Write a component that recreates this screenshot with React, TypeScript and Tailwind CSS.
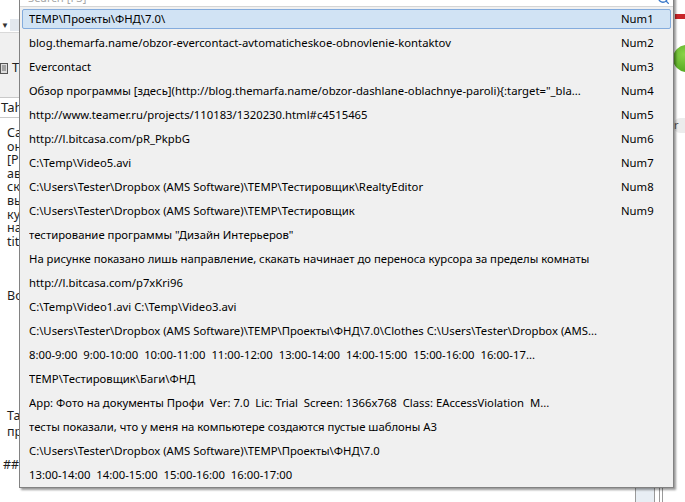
import { Search } from 'lucide-react';

interface ClipItem {
  text: string;
  hotkey?: string;
}

const items: ClipItem[] = [
  { text: 'ТЕМР\\Проекты\\ФНД\\7.0\\', hotkey: 'Num1' },
  { text: 'blog.themarfa.name/obzor-evercontact-avtomaticheskoe-obnovlenie-kontaktov', hotkey: 'Num2' },
  { text: 'Evercontact', hotkey: 'Num3' },
  {
    text: 'Обзор программы [здесь](http://blog.themarfa.name/obzor-dashlane-oblachnye-paroli){:target="_bla...',
    hotkey: 'Num4',
  },
  { text: 'http://www.teamer.ru/projects/110183/1320230.html#c4515465', hotkey: 'Num5' },
  { text: 'http://l.bitcasa.com/pR_PkpbG', hotkey: 'Num6' },
  { text: 'C:\\Temp\\Video5.avi', hotkey: 'Num7' },
  { text: 'C:\\Users\\Tester\\Dropbox (AMS Software)\\TEMP\\Тестировщик\\RealtyEditor', hotkey: 'Num8' },
  { text: 'C:\\Users\\Tester\\Dropbox (AMS Software)\\TEMP\\Тестировщик', hotkey: 'Num9' },
  { text: 'тестирование программы "Дизайн Интерьеров"' },
  { text: 'На рисунке показано лишь направление, скакать начинает до переноса курсора за пределы комнаты' },
  { text: 'http://l.bitcasa.com/p7xKri96' },
  { text: 'C:\\Temp\\Video1.avi C:\\Temp\\Video3.avi' },
  {
    text: 'C:\\Users\\Tester\\Dropbox (AMS Software)\\TEMP\\Проекты\\ФНД\\7.0\\Clothes C:\\Users\\Tester\\Dropbox (AMS...',
  },
  {
    text: '8:00-9:00  9:00-10:00  10:00-11:00  11:00-12:00  13:00-14:00  14:00-15:00  15:00-16:00  16:00-17...',
  },
  { text: 'ТЕМР\\Тестировщик\\Баги\\ФНД' },
  {
    text: 'App: Фото на документы Профи  Ver: 7.0  Lic: Trial  Screen: 1366x768  Class: EAccessViolation  M...',
  },
  { text: 'тесты показали, что у меня на компьютере создаются пустые шаблоны А3' },
  { text: 'C:\\Users\\Tester\\Dropbox (AMS Software)\\TEMP\\Проекты\\ФНД\\7.0' },
  { text: '13:00-14:00  14:00-15:00  15:00-16:00  16:00-17:00' },
];

// editor window behind the popup: only the first letters show
const bgLines = ['Сайт', 'он', '[Р', 'ав', 'ск', 'вы', 'ку', 'на', 'title'];

export default function App() {
  return (
    <div className="relative h-[502px] w-[685px] overflow-hidden bg-white font-['Noto_Sans',sans-serif] text-[11.3px] text-black">
      {/* Background window */}
      <div className="flex h-full">
        <div className="flex w-[19px] shrink-0 flex-col overflow-hidden">
          <div className="h-[18px]" />
          <div className="flex h-[14px] items-center">
            <span className="w-[9px] pl-[1px] text-[8px] leading-none text-[#333]">▼</span>
            <div className="ml-[1px] h-[12px] w-[20px] bg-[#e3e8ee]" />
          </div>
          <div className="h-[1px] bg-[#d9d9d9]" />
          <div className="flex h-[64px] items-center gap-[4px] bg-[#f0f0f0] pt-[6px]">
            <svg width="8" height="11" viewBox="0 0 8 11" className="shrink-0">
              <rect x="0.5" y="0.5" width="7" height="10" fill="#ddd" stroke="#555" />
              <path d="M2 3h4M2 5h4M2 7h4" stroke="#666" />
            </svg>
            <span className="text-[13px] text-[#222]">Т</span>
          </div>
          <div className="flex h-[21px] items-center whitespace-nowrap border-y border-[#c9c9c9] bg-white pl-[1px] text-[13px] text-[#222]">
            Tah
          </div>
          <div className="flex flex-1 flex-col pl-[7px] pt-[8px] text-[12.5px] leading-[13.6px] text-[#1e1e1e]">
            {bgLines.map((l) => (
              <div key={l} className="whitespace-nowrap">
                {l}
              </div>
            ))}
            <div className="mt-[41px] whitespace-nowrap">Во</div>
            <div className="mt-[106px] whitespace-nowrap">Та</div>
            <div className="mt-[2px] whitespace-nowrap">пр</div>
            <div className="mt-[20px] -ml-[4px] whitespace-nowrap">##</div>
          </div>
        </div>
        <div className="flex min-w-0 flex-1 flex-col justify-end">
          <div className="flex h-[14px] justify-end pr-[10px]">
            <div className="w-[20px] border-x border-[#9a9a9a] bg-[#e8eef4]" />
            <div className="ml-[4px] w-[4px] border-x border-[#9a9a9a]" />
          </div>
        </div>
        <div className="flex w-[12px] flex-col overflow-hidden">
          <div className="h-[14px]" />
          <div className="ml-[2px] h-[5px] bg-[#c8262a]" />
          <div className="h-[26px]" />
          <div className="h-[27px] w-[28px] shrink-0 rounded-full bg-[radial-gradient(circle_at_40%_35%,#8bd34a,#3f9a12)]" />
          <div className="h-[46px]" />
          <div className="flex h-[15px] w-[24px] shrink-0 items-center rounded-full bg-[#ececec] pl-[1px] text-[11px] text-[#555]">
            r
          </div>
        </div>
      </div>

      {/* Clipboard history popup */}
      <div className="absolute left-[19px] top-[-14px] w-[655px] border border-[#828282] bg-[#f0f0f0] shadow-[2px_2px_2px_rgba(0,0,0,0.4)]">
        <div className="flex h-[20px] items-center justify-between border-b border-[#d5d5d5] bg-white pl-[8px] pr-[3px] pt-[3px]">
          <span className="text-[#a8a8a8]">Search [F3]</span>
          <Search className="h-[13px] w-[13px] text-[#3a78c9]" strokeWidth={2.5} />
        </div>
        <div className="flex flex-col">
          {items.map((item, index) => (
            <div key={item.text} className="px-[2px] py-[2px]">
              <div
                className={`flex h-[20px] items-center rounded-[2px] border pl-[6px] ${
                  index === 0 ? 'border-[#84acdd] bg-[#d1e3f4]' : 'border-transparent'
                }`}
              >
                <span className="min-w-0 flex-1 overflow-hidden whitespace-pre">{item.text}</span>
                <span className="w-[49px] shrink-0">{item.hotkey}</span>
              </div>
            </div>
          ))}
        </div>
      </div>
    </div>
  );
}
